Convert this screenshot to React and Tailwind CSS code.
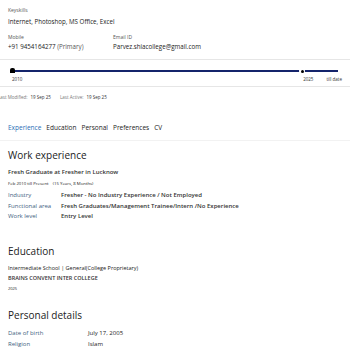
import React from "react";

const rows = [
  ["Industry", "Fresher - No Industry Experience / Not Employed"],
  ["Functional area", "Fresh Graduates/Management Trainee/Intern /No Experience"],
  ["Work level", "Entry Level"],
];

export default function App() {
  return (
    <div className="w-[350px] h-[350px] overflow-hidden bg-white text-[#222] font-['Open_Sans',sans-serif]">
      {/* contact block */}
      <div className="px-2 pt-[7px]">
        <div className="text-[5px] text-[#555] leading-[6px]">Keyskills</div>
        <div className="text-[6.2px] leading-[8px] mt-[5px]">Internet, Photoshop, MS Office, Excel</div>
        <div className="flex mt-[8px]">
          <div className="w-[105px]">
            <div className="text-[5px] text-[#555] leading-[6px]">Mobile</div>
            <div className="text-[6.2px] leading-[8px] mt-[3px]">
              +91 9454164277 <span className="text-[#555]">(Primary)</span>
            </div>
          </div>
          <div>
            <div className="text-[5px] text-[#555] leading-[6px]">Email ID</div>
            <div className="text-[6.2px] leading-[8px] mt-[3px]">Parvez.shiacollege@gmail.com</div>
          </div>
        </div>
      </div>

      {/* timeline */}
      <div className="mt-[8px] border-t border-b border-[#e6e6e6] pt-[9px] pb-[4px] px-[12px]">
        <div className="relative h-[4px] flex items-center">
          <div className="h-[2px] w-full bg-[#14246b]" />
          <div className="absolute left-[-2px] top-[-1px] w-[5px] h-[5px] bg-black rounded-t-[2px]" />
          <div className="absolute left-[287px] top-[-1px] w-[6px] h-[6px] rounded-full bg-white flex items-center justify-center">
            <div className="w-[3px] h-[3px] rounded-full bg-black" />
          </div>
        </div>
        <div className="flex text-[4.5px] text-[#333] leading-[6px] mt-[3px]">
          <span>2010</span>
          <span className="ml-auto mr-[13px]">2025</span>
          <span className="mr-[-4px]">till date</span>
        </div>
      </div>

      <div className="flex text-[4.5px] text-[#333] leading-[6px] mt-[7px] ml-[-2px]">
        <span className="text-[#777]">Last Modified:</span>
        <span className="ml-[3px]">19 Sep 25</span>
        <span className="text-[#777] ml-[9px]">Last Active:</span>
        <span className="ml-[3px]">19 Sep 25</span>
      </div>

      {/* tabs */}
      <div className="flex gap-[5px] px-2 mt-[24px] pb-[8px] text-[6.5px] leading-[8px] border-b border-[#f2f2f2]">
        <span className="text-[#2a6fb6]">Experience</span>
        <span>Education</span>
        <span>Personal</span>
        <span>Preferences</span>
        <span>CV</span>
      </div>

      {/* work experience */}
      <div className="px-2 pt-[8px]">
        <div className="text-[10px] leading-[12px] text-[#222]">Work experience</div>
        <div className="text-[6px] leading-[8px] font-semibold text-[#333] mt-[7px]">Fresh Graduate at Fresher in Lucknow</div>
        <div className="text-[4.3px] leading-[6px] mt-[4px]">
          Feb 2010 till Present <span className="ml-[3px]">(15 Years, 8 Months)</span>
        </div>
        <div className="mt-[4px]">
          {rows.map(([k, v]) => (
            <div key={k} className="flex text-[6px] leading-[10.5px]">
              <span className="w-[53px] text-[#3f5f82]">{k}</span>
              <span className="font-semibold text-[#333] whitespace-nowrap">{v}</span>
            </div>
          ))}
        </div>
      </div>

      {/* education */}
      <div className="px-2 mt-[23px]">
        <div className="text-[10px] leading-[12px]">Education</div>
        <div className="text-[5.5px] leading-[8px] mt-[7px]">Intermediate School | General(College Proprietary)</div>
        <div className="text-[5.5px] leading-[8px] font-semibold text-[#333] mt-[2px]">BRAINS CONVENT INTER COLLEGE</div>
        <div className="text-[4px] leading-[6px] mt-[4px]">2025</div>
      </div>

      {/* personal */}
      <div className="px-2 mt-[17px]">
        <div className="text-[10px] leading-[12px]">Personal details</div>
        <div className="flex text-[6px] leading-[11px] mt-[7px]">
          <span className="w-[80px] text-[#3f5f82]">Date of birth</span>
          <span>July 17, 2005</span>
        </div>
        <div className="flex text-[6px] leading-[11px]">
          <span className="w-[80px] text-[#3f5f82]">Religion</span>
          <span>Islam</span>
        </div>
      </div>
    </div>
  );
}
